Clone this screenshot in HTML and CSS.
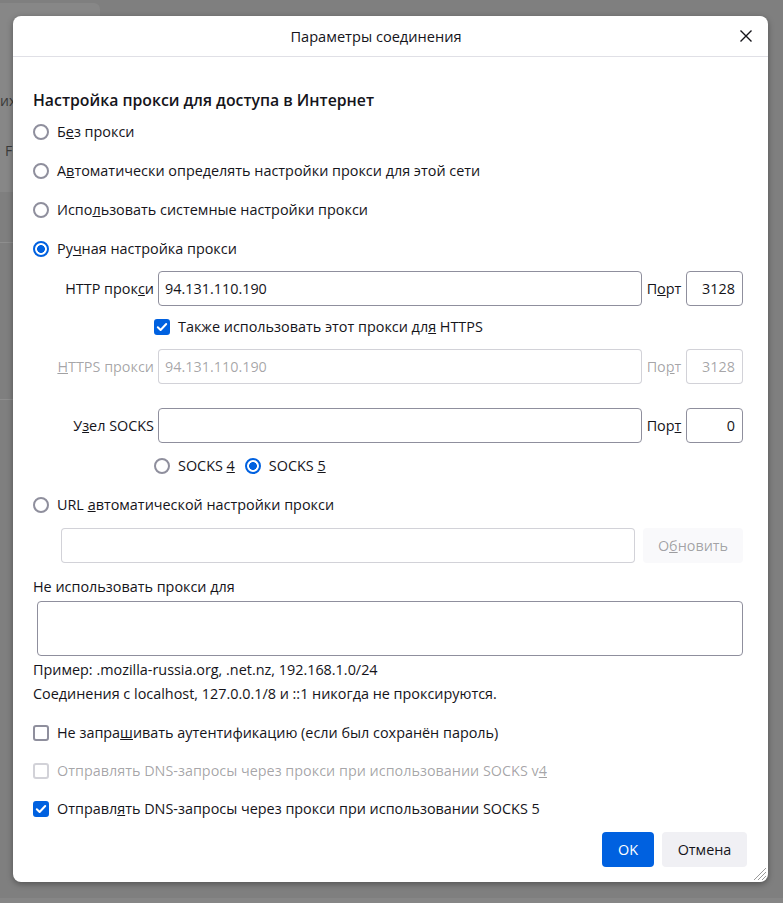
FILE: index.html
```html
<!DOCTYPE html>
<html lang="ru">
<head>
<meta charset="utf-8">
<title>Параметры соединения</title>
<link rel="stylesheet" href="styles.css">
</head>
<body>
<div class="backdrop">
  <div class="bg-panel"></div>
  <span class="bg-text bg-t1">их</span>
  <span class="bg-text bg-t2">Fi</span>
  <div class="bg-line bg-l1"></div>
  <div class="bg-line bg-l2"></div>
  <div class="bg-bottom"></div>
</div>

<div class="dialog">
  <div class="header">
    <div class="title">Параметры соединения</div>
    <button class="close" aria-label="Закрыть">
      <svg width="14" height="14" viewBox="0 0 14 14"><path d="M1.5 1.5 L12.5 12.5 M12.5 1.5 L1.5 12.5" stroke="#15141a" stroke-width="1.4" fill="none"/></svg>
    </button>
  </div>

  <div class="body">
    <h2 class="heading">Настройка прокси для доступа в Интернет</h2>

    <div class="row r-first"><span class="radio"></span><span>Б<u>е</u>з прокси</span></div>
    <div class="row r-next"><span class="radio"></span><span>А<u>в</u>томатически определять настройки прокси для этой сети</span></div>
    <div class="row r-next"><span class="radio"></span><span>Испо<u>л</u>ьзовать системные настройки прокси</span></div>
    <div class="row r-next"><span class="radio checked"></span><span>Ру<u>ч</u>ная настройка прокси</span></div>

    <div class="field-row f-http">
      <span class="field-label">HTTP прок<u>с</u>и</span>
      <span class="input field-input">94.131.110.190</span>
      <span class="port-label">П<u>о</u>рт</span>
      <span class="input port-input">3128</span>
    </div>
    <div class="row indent f-also"><span class="check checked"><svg width="16" height="16" viewBox="0 0 16 16"><path d="M3.8 8.3 L6.6 11 L12.2 5" stroke="#fff" stroke-width="2" fill="none" stroke-linecap="round" stroke-linejoin="round"/></svg></span><span>Также использовать этот прокси дл<u>я</u> HTTPS</span></div>
    <div class="field-row f-https disabled">
      <span class="field-label"><u>H</u>TTPS прокси</span>
      <span class="input field-input">94.131.110.190</span>
      <span class="port-label">По<u>р</u>т</span>
      <span class="input port-input">3128</span>
    </div>
    <div class="field-row f-socks">
      <span class="field-label">У<u>з</u>ел SOCKS</span>
      <span class="input field-input"></span>
      <span class="port-label">Пор<u>т</u></span>
      <span class="input port-input">0</span>
    </div>
    <div class="row indent f-ver">
      <span class="radio"></span><span>SOCKS <u>4</u></span>
      <span class="radio checked sp"></span><span>SOCKS <u>5</u></span>
    </div>

    <div class="row f-url"><span class="radio"></span><span>URL <u>а</u>втоматической настройки прокси</span></div>
    <div class="url-row">
      <span class="input url-input disabled-input"></span>
      <span class="btn btn-disabled">О<u>б</u>новить</span>
    </div>

    <div class="line f-noproxy">Не использовать прокси <u>д</u>ля</div>
    <div class="textarea"></div>
    <div class="line f-ex">Пример: .mozilla-russia.org, .net.nz, 192.168.1.0/24</div>
    <div class="line">Соединения с localhost, 127.0.0.1/8 и ::1 никогда не проксируются.</div>

    <div class="row c-first"><span class="check"></span><span>Не запра<u>ш</u>ивать аутентификацию (если был сохранён пароль)</span></div>
    <div class="row c-next disabled"><span class="check"></span><span>Отправлять DNS-запросы через прокси при использовании SOCKS v<u>4</u></span></div>
    <div class="row c-next"><span class="check checked"><svg width="16" height="16" viewBox="0 0 16 16"><path d="M3.8 8.3 L6.6 11 L12.2 5" stroke="#fff" stroke-width="2" fill="none" stroke-linecap="round" stroke-linejoin="round"/></svg></span><span>Отправл<u>я</u>ть DNS-запросы через прокси при использовании SOCKS 5</span></div>

    <div class="buttons">
      <span class="btn btn-primary">OK</span>
      <span class="btn btn-secondary">Отмена</span>
    </div>
  </div>

  <svg class="grip" width="15" height="15" viewBox="0 0 15 15"><path d="M14 2 L2 14 M14 6 L6 14 M14 10 L10 14" stroke="#9a9a9a" stroke-width="1" fill="none"/></svg>
</div>
</body>
</html>
```

FILE: styles.css
```css
* { box-sizing: border-box; }
html, body {
  margin: 0;
  padding: 0;
  width: 783px;
  height: 903px;
  overflow: hidden;
}
body {
  background: #7f7f7f;
  font-family: "Open Sans", "Noto Sans", sans-serif;
  font-size: 14.4px;
  color: #15141a;
  position: relative;
}

/* dimmed page behind the dialog */
.backdrop { position: absolute; inset: 0; }
.bg-panel {
  position: absolute; left: 0; top: 3px; width: 100px; height: 189px;
  background: #878787; border-top-right-radius: 6px;
}
.bg-text { position: absolute; color: #3a3a3a; font-size: 14px; line-height: 16px; }
.bg-t1 { left: 0; top: 93px; }
.bg-t2 { left: 5px; top: 143px; }
.bg-line { position: absolute; left: 0; width: 13px; height: 1px; background: #8e8e8e; }
.bg-l1 { top: 242px; }
.bg-l2 { top: 399px; }
.bg-bottom { position: absolute; left: 0; right: 0; top: 898px; height: 5px; background: #868686; }

/* dialog */
.dialog {
  position: absolute;
  left: 13px; top: 16px;
  width: 755px; height: 866px;
  background: #fff;
  border-radius: 8px;
  box-shadow: 0 2px 6px rgba(0,0,0,0.35);
  display: flex;
  flex-direction: column;
}
.header {
  height: 41px;
  border-bottom: 1px solid #e0e0e6;
  display: flex;
  align-items: center;
}
.title { flex: 1; text-align: center; font-size: 14.6px; line-height: 20px; }
.close {
  width: 14px; height: 14px; padding: 0; margin: 0 15px 0 0;
  border: 0; background: none; display: flex;
}

.body {
  flex: 1;
  padding: 0 25px 15px 20px;
  display: flex;
  flex-direction: column;
}
.heading {
  margin: 31px 0 0;
  font-size: 15.8px;
  font-weight: 600;
  line-height: 24px;
}

.row {
  display: flex;
  align-items: center;
  height: 24px;
  gap: 8px;
  line-height: 24px;
  white-space: nowrap;
}
.r-first { margin-top: 8px; }
.r-next { margin-top: 15px; }
.indent { padding-left: 121px; }

.radio {
  width: 16px; height: 16px; flex: none;
  border: 2px solid #8f8f9d;
  border-radius: 50%;
  background: #fff;
}
.radio.checked {
  border-color: #0061e0;
  background: radial-gradient(circle, #0061e0 0 3.6px, #fff 4.2px);
}
.radio.sp { margin-left: 2px; }

.check {
  width: 16px; height: 16px; flex: none;
  border: 2px solid #8f8f9d;
  border-radius: 3px;
  background: #fff;
  position: relative;
}
.check.checked { background: #0061e0; border-color: #0061e0; }
.check svg { position: absolute; left: -2px; top: -2px; }

.field-row {
  display: flex;
  align-items: center;
  height: 35px;
  white-space: nowrap;
}
.field-label { width: 121px; margin-right: 4px; text-align: right; }
.input {
  height: 35px;
  border: 1px solid #8f8f9d;
  border-radius: 4px;
  display: flex;
  align-items: center;
  padding: 0 7px 0 6px;
  background: #fff;
}
.field-input { flex: 1; }
.port-label { width: 44px; text-align: center; }
.port-input { width: 57px; justify-content: flex-end; }

.disabled { color: rgba(21,20,26,0.4); }
.disabled .input { border-color: rgba(143,143,157,0.4); }
.disabled .check { border-color: rgba(143,143,157,0.4); }

.f-http { margin-top: 10px; }
.f-also { margin-top: 9px; }
.f-https { margin-top: 10px; }
.f-socks { margin-top: 24px; }
.f-ver { margin-top: 11px; }
.f-url { margin-top: 15px; }

.url-row {
  margin-top: 11px;
  padding-left: 28px;
  display: flex;
  gap: 8px;
}
.url-input { flex: 1; }
.disabled-input { border-color: rgba(143,143,157,0.4); }

.btn {
  height: 35px;
  border-radius: 4px;
  display: flex;
  align-items: center;
  justify-content: center;
  white-space: nowrap;
}
.btn-disabled {
  width: 100px;
  background: #f9f9fb;
  color: rgba(21,20,26,0.4);
}

.line { line-height: 24px; white-space: nowrap; }
.f-noproxy { margin-top: 12px; }
.textarea {
  margin: 2px 0 0 4px;
  height: 55px;
  border: 1px solid #8f8f9d;
  border-radius: 4px;
}
.f-ex { margin-top: 2px; }

.c-first { margin-top: 15px; }
.c-next { margin-top: 14px; }

.buttons {
  margin-top: 11px;
  margin-right: -4px;
  display: flex;
  justify-content: flex-end;
  gap: 8px;
}
.btn-primary { width: 52px; background: #0061e0; color: #fff; }
.btn-secondary { width: 85px; background: #f0f0f4; }

.grip { position: absolute; right: 1px; bottom: 1px; }
```
